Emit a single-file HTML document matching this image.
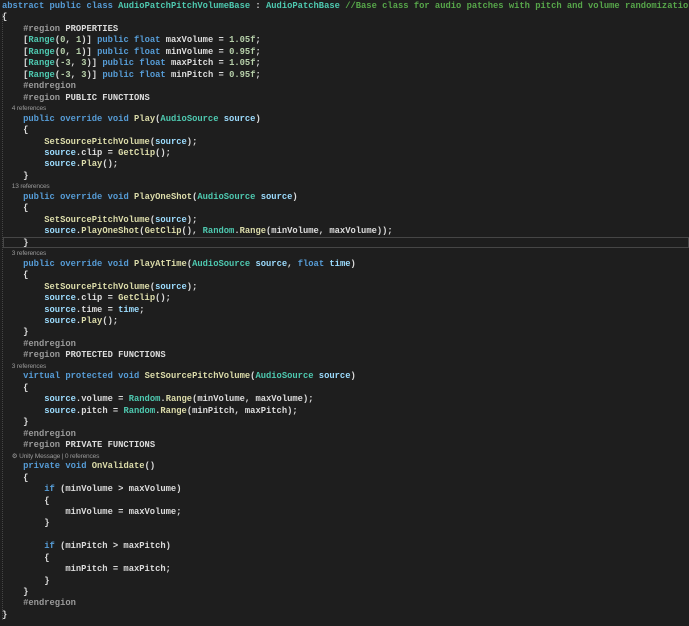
<!DOCTYPE html>
<html><head><meta charset="utf-8"><style>
html,body{margin:0;padding:0;background:#1e1e1e;width:689px;height:626px;overflow:hidden}
#c{position:absolute;left:2px;top:1px;font-family:"Liberation Mono",monospace;font-size:8.8px;color:#dcdcdc;white-space:pre;font-weight:bold}
.l{height:11.45px;line-height:11.45px}
.r{height:9.7px;line-height:9.7px;font-family:"Liberation Sans",sans-serif;font-size:6.6px;color:#999;font-weight:normal;letter-spacing:-0.2px}
.k{color:#569cd6}.t{color:#4ec9b0}.m{color:#dcdcaa}.p{color:#9cdcfe}.n{color:#b5cea8}.c{color:#57a64a}.g{color:#9b9b9b}
.hl{position:absolute;left:3px;top:237px;width:686px;height:11px;border:1px solid #464646;box-sizing:border-box}
.gl{position:absolute;left:2px;top:14px;height:606px;border-left:1px dotted #444}
</style></head><body>
<div class="gl"></div>
<div class="hl"></div>
<div id="c"><div class="l"><span class="k">abstract</span> <span class="k">public</span> <span class="k">class</span> <span class="t">AudioPatchPitchVolumeBase</span> : <span class="t">AudioPatchBase</span> <span class="c">//Base class for audio patches with pitch and volume randomization</span></div><div class="l">{</div><div class="l">    <span class="g">#region</span> PROPERTIES</div><div class="l">    [<span class="t">Range</span>(<span class="n">0</span>, <span class="n">1</span>)] <span class="k">public</span> <span class="k">float</span> maxVolume = <span class="n">1.05f</span>;</div><div class="l">    [<span class="t">Range</span>(<span class="n">0</span>, <span class="n">1</span>)] <span class="k">public</span> <span class="k">float</span> minVolume = <span class="n">0.95f</span>;</div><div class="l">    [<span class="t">Range</span>(<span class="n">-3</span>, <span class="n">3</span>)] <span class="k">public</span> <span class="k">float</span> maxPitch = <span class="n">1.05f</span>;</div><div class="l">    [<span class="t">Range</span>(<span class="n">-3</span>, <span class="n">3</span>)] <span class="k">public</span> <span class="k">float</span> minPitch = <span class="n">0.95f</span>;</div><div class="l">    <span class="g">#endregion</span></div><div class="l">    <span class="g">#region</span> PUBLIC FUNCTIONS</div><div class="r">      4 references</div><div class="l">    <span class="k">public</span> <span class="k">override</span> <span class="k">void</span> <span class="m">Play</span>(<span class="t">AudioSource</span> <span class="p">source</span>)</div><div class="l">    {</div><div class="l">        <span class="m">SetSourcePitchVolume</span>(<span class="p">source</span>);</div><div class="l">        <span class="p">source</span>.clip = <span class="m">GetClip</span>();</div><div class="l">        <span class="p">source</span>.<span class="m">Play</span>();</div><div class="l">    }</div><div class="r">      13 references</div><div class="l">    <span class="k">public</span> <span class="k">override</span> <span class="k">void</span> <span class="m">PlayOneShot</span>(<span class="t">AudioSource</span> <span class="p">source</span>)</div><div class="l">    {</div><div class="l">        <span class="m">SetSourcePitchVolume</span>(<span class="p">source</span>);</div><div class="l">        <span class="p">source</span>.<span class="m">PlayOneShot</span>(<span class="m">GetClip</span>(), <span class="t">Random</span>.<span class="m">Range</span>(minVolume, maxVolume));</div><div class="l">    }</div><div class="r">      3 references</div><div class="l">    <span class="k">public</span> <span class="k">override</span> <span class="k">void</span> <span class="m">PlayAtTime</span>(<span class="t">AudioSource</span> <span class="p">source</span>, <span class="k">float</span> <span class="p">time</span>)</div><div class="l">    {</div><div class="l">        <span class="m">SetSourcePitchVolume</span>(<span class="p">source</span>);</div><div class="l">        <span class="p">source</span>.clip = <span class="m">GetClip</span>();</div><div class="l">        <span class="p">source</span>.time = <span class="p">time</span>;</div><div class="l">        <span class="p">source</span>.<span class="m">Play</span>();</div><div class="l">    }</div><div class="l">    <span class="g">#endregion</span></div><div class="l">    <span class="g">#region</span> PROTECTED FUNCTIONS</div><div class="r">      3 references</div><div class="l">    <span class="k">virtual</span> <span class="k">protected</span> <span class="k">void</span> <span class="m">SetSourcePitchVolume</span>(<span class="t">AudioSource</span> <span class="p">source</span>)</div><div class="l">    {</div><div class="l">        <span class="p">source</span>.volume = <span class="t">Random</span>.<span class="m">Range</span>(minVolume, maxVolume);</div><div class="l">        <span class="p">source</span>.pitch = <span class="t">Random</span>.<span class="m">Range</span>(minPitch, maxPitch);</div><div class="l">    }</div><div class="l">    <span class="g">#endregion</span></div><div class="l">    <span class="g">#region</span> PRIVATE FUNCTIONS</div><div class="r">      ⚙ Unity Message | 0 references</div><div class="l">    <span class="k">private</span> <span class="k">void</span> <span class="m">OnValidate</span>()</div><div class="l">    {</div><div class="l">        <span class="k">if</span> (minVolume &gt; maxVolume)</div><div class="l">        {</div><div class="l">            minVolume = maxVolume;</div><div class="l">        }</div><div class="l"> </div><div class="l">        <span class="k">if</span> (minPitch &gt; maxPitch)</div><div class="l">        {</div><div class="l">            minPitch = maxPitch;</div><div class="l">        }</div><div class="l">    }</div><div class="l">    <span class="g">#endregion</span></div><div class="l">}</div></div>
</body></html>
